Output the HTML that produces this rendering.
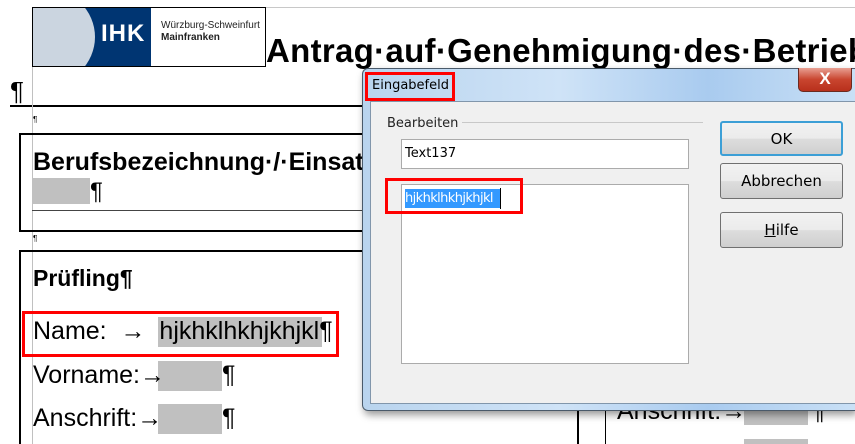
<!DOCTYPE html>
<html><head><meta charset="utf-8"><style>
*{margin:0;padding:0;box-sizing:border-box}
html,body{width:855px;height:444px;overflow:hidden}
body{background:#fff;position:relative;font-family:"Liberation Sans",sans-serif;color:#000}
.a{position:absolute}
.b{font-weight:bold}
.g{background:#c0c0c0}
.btn{position:absolute;left:720px;width:123px;border:1px solid #707070;border-radius:3px;background:linear-gradient(#f2f2f2 0%,#ebebeb 50%,#dddddd 51%,#cfcfcf 100%);font-size:15px;text-align:center;font-family:"DejaVu Sans","Liberation Sans",sans-serif}
</style></head><body>
<!-- document -->
<div class="a" style="left:265px;top:7px;width:590px;height:1px;background:#c8c8c8"></div>
<div class="a" style="left:32px;top:7px;width:234px;height:60px;border:1px solid #000;overflow:hidden;background:#fff">
  <div class="a" style="left:40px;top:0;width:78px;height:58px;background:#003572"></div>
  <div class="a" style="left:-40px;top:-20px;width:102px;height:98px;border-radius:50%;background:#cbd5e0"></div>
  <div class="a" style="left:0;top:0;width:30px;height:58px;background:#cbd5e0"></div>
  <div class="a b" style="left:68px;top:12px;color:#fff;font-size:24px;letter-spacing:1px">IHK</div>
  <div class="a" style="left:128px;top:12px;font-size:10px;color:#222;line-height:12px">Würzburg-Schweinfurt<br><span style="font-weight:600">Mainfranken</span></div>
</div>
<div class="a b" style="left:266px;top:32px;font-size:33px;white-space:nowrap;letter-spacing:0.3px">Antrag·auf·Genehmigung·des·Betriebl</div>
<div class="a" style="left:10px;top:76px;font-size:26px">¶</div>
<div class="a" style="left:10px;top:105px;width:400px;height:2px;background:#000"></div>
<div class="a" style="left:32px;top:67px;width:1px;height:377px;background:#c0c0c0"></div>
<div class="a" style="left:33px;top:115px;font-size:8px">¶</div>
<div class="a" style="left:19px;top:133px;width:420px;height:99px;border:2px solid #000"></div>
<div class="a b" style="left:33px;top:148px;font-size:25px;white-space:nowrap">Berufsbezeichnung·/·Einsat</div>
<div class="a g" style="left:32px;top:178px;width:58px;height:26px"></div>
<div class="a" style="left:90px;top:178px;font-size:24px">¶</div>
<div class="a" style="left:32px;top:210px;width:400px;height:1px;background:#444"></div>
<div class="a" style="left:33px;top:234px;font-size:8px">¶</div>
<div class="a" style="left:19px;top:250px;width:560px;height:194px;border:2px solid #000;border-bottom:none"></div>
<div class="a b" style="left:33px;top:265px;font-size:23px">Prüfling¶</div>
<div class="a g" style="left:158px;top:317px;width:164px;height:30px"></div>
<div class="a" style="left:33px;top:317px;font-size:25px;white-space:nowrap">Name:&nbsp; →&nbsp; hjkhklhkhjkhjkl¶</div>
<div class="a" style="left:22px;top:311px;width:317px;height:46px;border:3px solid #f00"></div>
<div class="a g" style="left:158px;top:361px;width:64px;height:30px"></div>
<div class="a" style="left:33px;top:361px;font-size:25px;white-space:nowrap">Vorname:→</div>
<div class="a" style="left:222px;top:361px;font-size:25px">¶</div>
<div class="a g" style="left:158px;top:404px;width:64px;height:30px"></div>
<div class="a" style="left:33px;top:404px;font-size:25px;white-space:nowrap">Anschrift:→</div>
<div class="a" style="left:222px;top:404px;font-size:25px">¶</div>
<div class="a" style="left:605px;top:400px;width:1px;height:44px;background:#000"></div>
<div class="a g" style="left:744px;top:405px;width:64px;height:20px"></div>
<div class="a" style="left:617px;top:397px;font-size:25px;white-space:nowrap">Anschrift:→</div>
<div class="a" style="left:812px;top:398px;font-size:24px">¶</div>
<div class="a g" style="left:744px;top:439px;width:64px;height:5px"></div>
<!-- dialog -->
<div class="a" style="left:362px;top:68px;width:493px;height:343px;border:1px solid #4a5a6a;border-right:none;border-radius:6px 0 0 6px;background:linear-gradient(90deg,#b9d4ee,#cfe3f7 40%,#a9cbef 70%,#c9e0f6);box-shadow:2px 4px 8px rgba(0,0,0,.4)"></div>
<div class="a" style="left:370px;top:101px;width:485px;height:303px;border:1px solid #8196ab;border-right:none;background:#f0f0f0"></div>
<div class="a" style="left:372px;top:78px;font-size:13px;font-family:'DejaVu Sans','Liberation Sans',sans-serif">Eingabefeld</div>
<div class="a" style="left:365px;top:72px;width:90px;height:29px;border:3px solid #f00"></div>
<div class="a" style="left:798px;top:68px;width:54px;height:24px;border:1px solid #6b2a20;border-top:none;border-radius:0 0 5px 5px;background:linear-gradient(#e8a093,#c9452f 50%,#b8301c);color:#fff;text-align:center;font-weight:bold;font-size:17px;line-height:22px">X</div>
<div class="a" style="left:387px;top:116px;font-size:13px;font-family:'DejaVu Sans','Liberation Sans',sans-serif;color:#222">Bearbeiten</div>
<div class="a" style="left:462px;top:122px;width:241px;height:1px;background:#c8c8c8"></div>
<div class="a" style="left:401px;top:139px;width:288px;height:30px;border:1px solid #ababab;background:#fff"></div>
<div class="a" style="left:405px;top:146px;font-size:13px;font-family:'DejaVu Sans','Liberation Sans',sans-serif">Text137</div>
<div class="a" style="left:401px;top:184px;width:288px;height:180px;border:1px solid #ababab;background:#fff"></div>
<div class="a" style="left:405px;top:189px;width:95px;height:19px;background:#3399ff;color:#fff;font-size:13px;line-height:19px;font-family:'DejaVu Sans','Liberation Sans',sans-serif;letter-spacing:-0.6px;white-space:nowrap">hjkhklhkhjkhjkl</div>
<div class="a" style="left:500px;top:188px;width:1px;height:21px;background:#000"></div>
<div class="a" style="left:385px;top:178px;width:138px;height:36px;border:3px solid #f00"></div>
<div class="btn" style="top:121px;height:35px;line-height:33px;border:2px solid #3c9fd6">OK</div>
<div class="btn" style="top:163px;height:36px;line-height:34px">Abbrechen</div>
<div class="btn" style="top:212px;height:36px;line-height:34px"><u>H</u>ilfe</div>
</body></html>
